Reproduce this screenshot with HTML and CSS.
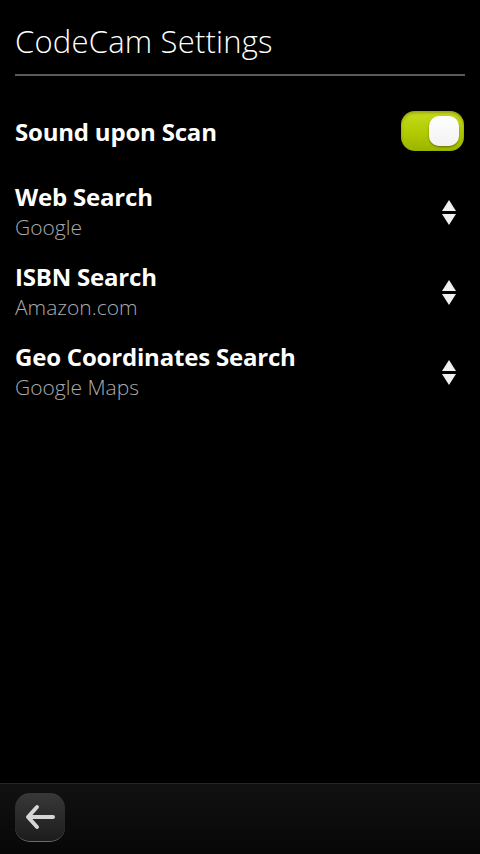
FILE: index.html
```html
<!DOCTYPE html>
<html lang="en">
  <head>
    <meta charset="UTF-8" />
    <meta name="viewport" content="width=device-width, initial-scale=1.0" />
    <title>CodeCam Settings</title>
    <link rel="stylesheet" href="styles.css">
  </head>
  <body>
    <div class="page">
      <div class="header">
        <h1>CodeCam Settings</h1>
      </div>

      <div class="list">
        <div class="row switch-row">
          <span class="label">Sound upon Scan</span>
          <div class="toggle"><div class="knob"></div></div>
        </div>

        <div class="row combo">
          <div class="texts">
            <span class="label">Web Search</span>
            <span class="value">Google</span>
          </div>
          <svg class="updown" width="14" height="26" viewBox="0 0 14 26">
            <polygon points="7,0 14,11 0,11" />
            <polygon points="0,14 14,14 7,25" />
          </svg>
        </div>

        <div class="row combo">
          <div class="texts">
            <span class="label">ISBN Search</span>
            <span class="value">Amazon.com</span>
          </div>
          <svg class="updown" width="14" height="26" viewBox="0 0 14 26">
            <polygon points="7,0 14,11 0,11" />
            <polygon points="0,14 14,14 7,25" />
          </svg>
        </div>

        <div class="row combo">
          <div class="texts">
            <span class="label">Geo Coordinates Search</span>
            <span class="value">Google Maps</span>
          </div>
          <svg class="updown" width="14" height="26" viewBox="0 0 14 26">
            <polygon points="7,0 14,11 0,11" />
            <polygon points="0,14 14,14 7,25" />
          </svg>
        </div>
      </div>

      <div class="toolbar">
        <button class="back">
          <svg width="32" height="26" viewBox="0 0 32 26">
            <path d="M13 3 L4 13 L13 23 M5 13 L29 13" />
          </svg>
        </button>
      </div>
    </div>
  </body>
</html>
```

FILE: styles.css
```css
html, body {
  margin: 0;
  height: 100%;
  background-color: #000;
}
body {
  font-family: "Open Sans", "Noto Sans", sans-serif;
  color: #fff;
}
.page {
  display: flex;
  flex-direction: column;
  height: 854px;
}
.header {
  margin: 0 15px;
  border-bottom: 2px solid #5a5a5a;
  height: 76px;
  box-sizing: border-box;
}
h1 {
  margin: 0;
  padding-top: 20px;
  font-size: 31px;
  font-weight: 300;
  line-height: 42px;
  letter-spacing: 0.2px;
}
.list {
  flex: 1;
  padding: 0 15px;
}
.row {
  display: flex;
  align-items: center;
  justify-content: space-between;
}
.switch-row {
  height: 40px;
  margin-top: 35px;
  margin-bottom: 12px;
}
.label {
  font-size: 24px;
  font-weight: 700;
  letter-spacing: -0.2px;
}
.combo {
  height: 62px;
  padding-top: 18px;
}
.combo .texts {
  display: flex;
  flex-direction: column;
}
.combo .label {
  line-height: 30px;
}
.combo .updown {
  margin-top: 2px;
}
.value {
  font-size: 21px;
  font-weight: 300;
  color: #ababab;
  line-height: 30px;
}
.updown {
  fill: #f0f0f0;
  margin-right: 9px;
}
.toggle {
  width: 63px;
  height: 40px;
  border-radius: 14px;
  box-sizing: border-box;
  background: linear-gradient(#c8dc1c, #aec800 60%, #9ab400);
  box-shadow: inset 0 2px 3px rgba(0, 0, 0, 0.25);
  display: flex;
  align-items: center;
  justify-content: flex-end;
  padding-right: 5px;
  margin-right: 1px;
}
.knob {
  width: 30px;
  height: 30px;
  border-radius: 10px;
  background: linear-gradient(#ffffff, #f2f2f2);
  box-shadow: 0 1px 2px rgba(0, 0, 0, 0.4);
}
.toolbar {
  height: 71px;
  box-sizing: border-box;
  border-top: 1px solid #262626;
  background: linear-gradient(#111, #070707);
  padding: 9px 15px 0;
}
.back {
  width: 50px;
  height: 49px;
  border-radius: 15px;
  border: none;
  border-bottom: 1px solid #6a6a6a;
  background: linear-gradient(#383838, #1c1c1c);
  display: flex;
  align-items: center;
  justify-content: center;
  padding: 0;
}
.back svg path {
  fill: none;
  stroke: #d6d6d6;
  stroke-width: 4;
  stroke-linecap: round;
  stroke-linejoin: round;
}
```
